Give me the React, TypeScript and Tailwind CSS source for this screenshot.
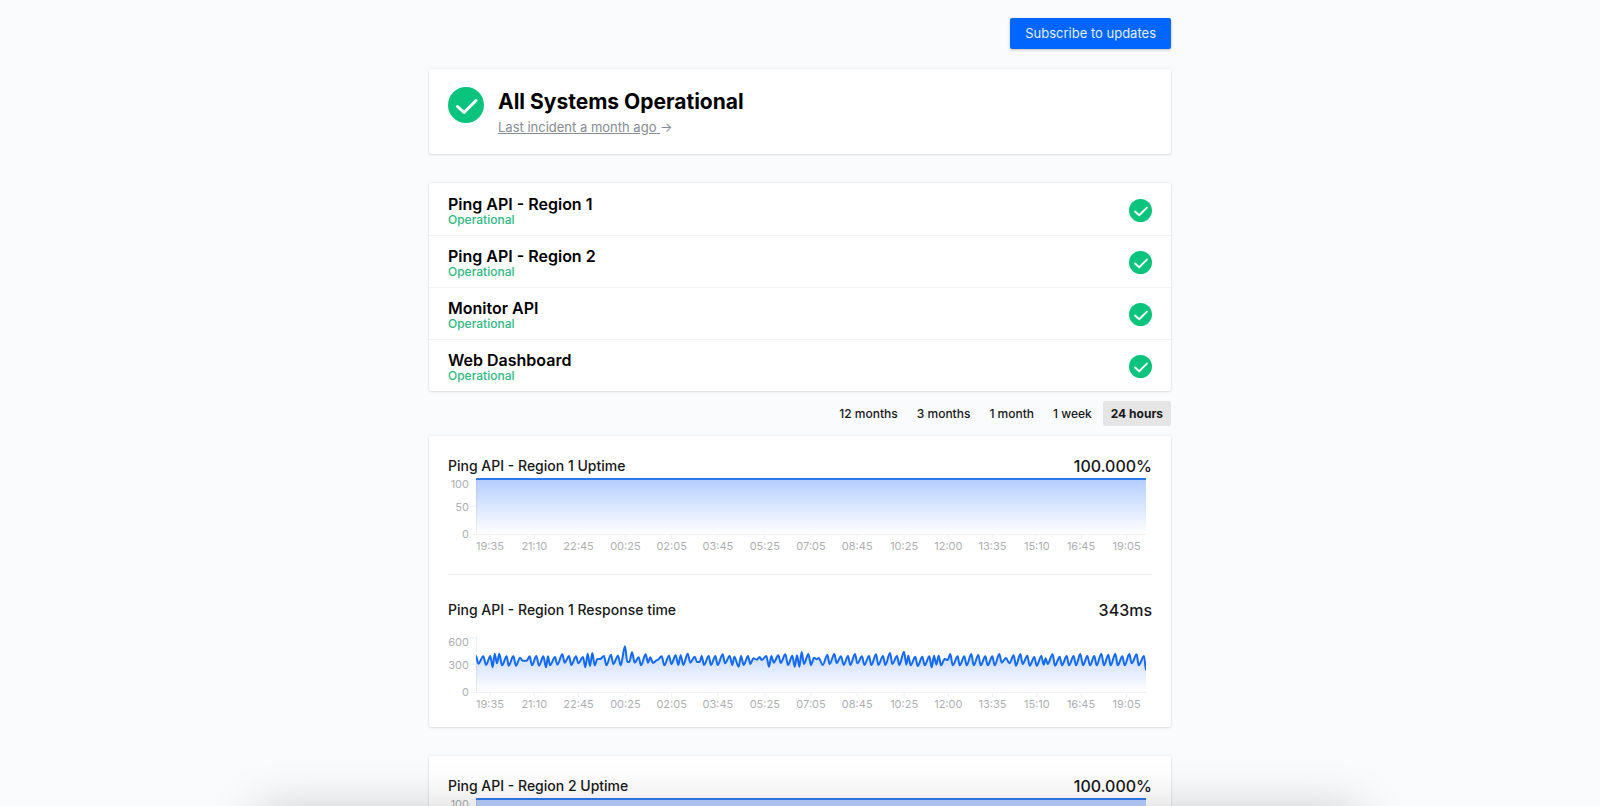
import type { ReactNode } from 'react'

const services = ['Ping API - Region 1', 'Ping API - Region 2', 'Monitor API', 'Web Dashboard']

const ranges = ['12 months', '3 months', '1 month', '1 week', '24 hours']

// label and its distance from the left edge of the plot, in percent
const ticks: [string, string][] = [
  ['19:35', '2.1%'],
  ['21:10', '8.7%'],
  ['22:45', '15.3%'],
  ['00:25', '22.3%'],
  ['02:05', '29.2%'],
  ['03:45', '36.1%'],
  ['05:25', '43.1%'],
  ['07:05', '50%'],
  ['08:45', '56.9%'],
  ['10:25', '63.9%'],
  ['12:00', '70.5%'],
  ['13:35', '77.1%'],
  ['15:10', '83.7%'],
  ['16:45', '90.3%'],
  ['19:05', '97.1%'],
]

// x, y pairs, drawn in a 2010 x 168 box
const response = [
  0, 60, 7, 83, 22, 61, 30, 87, 43, 60, 50, 94, 56, 53, 63, 82, 70, 53, 78, 88, 92, 61, 98, 89, 112, 61, 120, 89,
  132, 65, 140, 74, 152, 74, 161, 61, 168, 88, 181, 60, 189, 89, 202, 61, 210, 94, 216, 61, 222, 88, 237, 63,
  244, 86, 259, 55, 266, 80, 279, 60, 286, 87, 300, 61, 307, 82, 321, 63, 328, 94, 335, 53, 342, 90, 349, 51,
  356, 88, 364, 69, 372, 69, 384, 60, 391, 88, 405, 56, 412, 84, 426, 59, 434, 88, 447, 31, 454, 78, 460, 78,
  468, 49, 476, 80, 488, 64, 495, 88, 509, 55, 516, 80, 523, 64, 531, 81, 544, 72, 557, 61, 565, 88, 579, 59,
  586, 84, 599, 58, 607, 87, 614, 58, 622, 87, 635, 53, 643, 80, 656, 62, 663, 78, 671, 78, 677, 60, 684, 87,
  698, 60, 705, 87, 718, 60, 725, 87, 740, 55, 747, 82, 761, 60, 769, 87, 775, 62, 788, 92, 795, 60, 803, 87,
  816, 60, 823, 84, 832, 67, 842, 71, 851, 63, 857, 72, 871, 60, 879, 92, 886, 60, 893, 80, 907, 58, 914, 81,
  928, 55, 936, 87, 949, 59, 956, 92, 963, 58, 970, 92, 977, 48, 984, 84, 997, 54, 1005, 87, 1014, 65, 1022, 70,
  1028, 66, 1040, 87, 1054, 57, 1061, 84, 1075, 54, 1082, 81, 1095, 61, 1103, 87, 1116, 60, 1123, 87, 1137, 54,
  1144, 82, 1158, 61, 1165, 87, 1179, 60, 1186, 87, 1200, 55, 1207, 87, 1221, 60, 1228, 87, 1242, 51, 1249, 84,
  1263, 60, 1270, 87, 1284, 47, 1291, 86, 1297, 59, 1304, 88, 1318, 62, 1325, 90, 1339, 62, 1346, 88, 1360, 61,
  1367, 94, 1374, 59, 1381, 86, 1388, 59, 1395, 88, 1406, 69, 1415, 72, 1423, 54, 1430, 88, 1445, 61, 1451, 88,
  1465, 61, 1472, 88, 1486, 54, 1493, 88, 1507, 57, 1514, 88, 1528, 61, 1535, 88, 1549, 61, 1556, 88, 1570, 54,
  1577, 80, 1590, 66, 1600, 82, 1613, 58, 1620, 89, 1633, 54, 1640, 84, 1654, 59, 1661, 89, 1675, 63, 1682, 89,
  1696, 60, 1703, 86, 1709, 67, 1715, 84, 1730, 55, 1737, 89, 1751, 62, 1758, 88, 1772, 60, 1779, 88, 1793, 60,
  1800, 88, 1813, 54, 1821, 88, 1834, 60, 1842, 88, 1855, 60, 1862, 88, 1876, 53, 1884, 88, 1897, 56, 1904, 88,
  1918, 53, 1925, 88, 1939, 61, 1946, 88, 1960, 54, 1967, 82, 1982, 55, 1988, 88, 2004, 60, 2010, 102,
]

const uptime = [0, 3, 2010, 3]

function curve(points: number[]) {
  let d = `M${points[0]} ${points[1]}`
  for (let i = 2; i < points.length; i += 2) {
    const [x0, y0, x1, y1] = points.slice(i - 2, i + 2)
    const step = (x1 - x0) / 3
    d += `C${x0 + step} ${y0} ${x1 - step} ${y1} ${x1} ${y1}`
  }
  return d
}

function Check({ className }: { className: string }) {
  return (
    <svg viewBox="0 0 36 36" className={className} aria-hidden="true">
      <circle cx="18" cy="18" r="18" fill="#0ac47d" />
      <path d="M9.5 19.5l6.5 6L28 13.5" fill="none" stroke="#fff" strokeWidth="3" strokeLinecap="round" strokeLinejoin="round" />
    </svg>
  )
}

type ChartProps = {
  id: string
  title: string
  value: string
  points: number[]
  labels: string[]
  line: string
}

function Chart({ id, title, value, points, labels, line }: ChartProps) {
  const d = curve(points)
  return (
    <>
      <div className="flex items-center justify-between">
        <h3 className="text-sm font-medium">{title}</h3>
        <span className="text-base font-medium">{value}</span>
      </div>
      <div className={points === uptime ? 'flex' : 'mt-[14px] flex'}>
        <svg className="h-[76px] w-7 shrink-0 overflow-visible text-[11px]" fill="#adafb2" textAnchor="end">
          <text x="21" y="10">{labels[0]}</text>
          <text x="21" y="33">{labels[1]}</text>
          <text x="21" y="60">{labels[2]}</text>
          <path d="M23 1.5h5M23 28.5h5M23 56.5h5" stroke="#f3f3f4" />
        </svg>
        <svg className="mr-1.5 h-[76px] min-w-0 flex-1 overflow-visible text-[11px]">
          <defs>
            <linearGradient id={id} x1="0" y1="0" x2="0" y2="168" gradientUnits="userSpaceOnUse">
              <stop offset="0" stopColor="#0055ff" stopOpacity="0.3" />
              <stop offset="1" stopColor="#0055ff" stopOpacity="0" />
            </linearGradient>
          </defs>
          <path d="M.5 0v56" stroke="#efefef" />
          <svg width="100%" height="56" viewBox="0 0 2010 168" preserveAspectRatio="none">
            <path d={`${d}V168H0Z`} fill={`url(#${id})`} />
            <path d={d} fill="none" stroke={line} strokeWidth="2" vectorEffect="non-scaling-stroke" />
          </svg>
          <line x1="0" x2="100%" y1="56.5" y2="56.5" stroke="#f0f0f2" />
          {ticks.map(([label, x]) => (
            <g key={label}>
              <line x1={x} x2={x} y1="56" y2="61" stroke="#f0f0f2" />
              <text x={x} y="72" textAnchor="middle" fill="#adafb2">{label}</text>
            </g>
          ))}
        </svg>
      </div>
    </>
  )
}

function Card({ children, className = '' }: { children: ReactNode; className?: string }) {
  return (
    <section className={`rounded-xs bg-white shadow-[0_0_3px_rgba(0,0,0,0.1),0_1px_2px_rgba(0,0,0,0.08)] ${className}`}>
      {children}
    </section>
  )
}

function Monitor({ id, name, ms }: { id: string; name: string; ms: string }) {
  return (
    <Card className="px-[19px] pt-[18px] pb-[15px]">
      <Chart id={`${id}-up`} title={`${name} Uptime`} value="100.000%" points={uptime} labels={['100', '50', '0']} line="#2f78ec" />
      <hr className="mt-5 mb-[23px] border-[#f1f1f2]" />
      <Chart id={`${id}-rt`} title={`${name} Response time`} value={ms} points={response} labels={['600', '300', '0']} line="#1469f5" />
    </Card>
  )
}

export default function App() {
  return (
    <div className="min-h-screen bg-[#fafbfd] font-['Inter',sans-serif] text-[#17181a]">
      <main className="mx-auto max-w-[742px] pt-[18px] pb-10">
        <div className="flex justify-end">
          <button type="button" className="h-[31px] rounded-xs bg-[#0066ff] px-[15px] text-[13px] text-[#e3eeff] shadow-[0_1px_3px_rgba(0,0,0,0.25)]">
            Subscribe to updates
          </button>
        </div>

        <Card className="mt-5 flex gap-[14px] px-[19px] pt-[18px] pb-[17px]">
          <Check className="h-9 w-9 shrink-0" />
          <div>
            <h1 className="text-[21px] leading-[30px] font-bold text-black">All Systems Operational</h1>
            <p className="text-[13px] leading-5 text-[#868c93]">
              <a href="#history" className="underline">Last incident a month ago{'\u00a0'}</a>→
            </p>
          </div>
        </Card>

        {/* Services */}
        <Card className="mt-[29px]">
          <ul>
            {services.map((name) => (
              <li key={name} className="flex h-[52px] items-center justify-between border-t border-[#f3f3f4] px-[19px] pt-[2px] first:border-transparent">
                <div>
                  <h2 className="text-base leading-[18px] font-semibold text-black">{name}</h2>
                  <p className="text-xs leading-[14px] font-medium text-[#2fb87f]">Operational</p>
                </div>
                <Check className="h-[23px] w-[23px]" />
              </li>
            ))}
          </ul>
        </Card>

        {/* Range picker */}
        <div className="my-[10px] flex justify-end gap-[3px]">
          {ranges.map((range) => (
            <button
              key={range}
              type="button"
              className={
                range === '24 hours'
                  ? 'h-[25px] rounded-xs bg-[#e5e5e5] px-2 text-xs font-bold'
                  : 'h-[25px] rounded-xs px-2 text-xs font-medium'
              }
            >
              {range}
            </button>
          ))}
        </div>

        <div className="space-y-[29px]">
          <Monitor id="r1" name="Ping API - Region 1" ms="343ms" />
          <Monitor id="r2" name="Ping API - Region 2" ms="343ms" />
        </div>
      </main>

      {/* Shade rising from the bottom edge */}
      <div className="pointer-events-none fixed top-full right-[15%] left-[16%] h-20 shadow-[0_4px_50px_rgba(0,0,0,0.2)]" />
    </div>
  )
}
